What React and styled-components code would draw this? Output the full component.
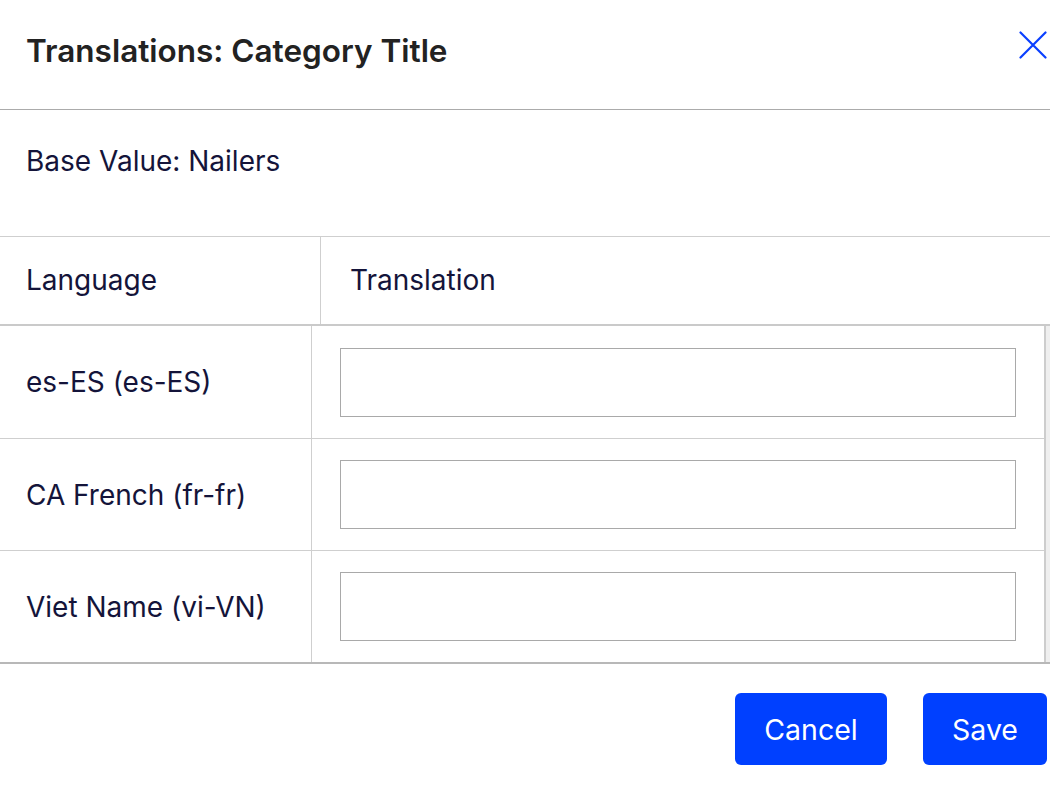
import React from 'react';
import styled, { createGlobalStyle } from 'styled-components';

const GlobalStyle = createGlobalStyle`
  html, body {
    margin: 0;
    padding: 0;
    background: #fff;
  }
  body {
    font-family: Inter, "Noto Sans", "Liberation Sans", sans-serif;
    color: #14143a;
  }
  * {
    box-sizing: border-box;
  }
`;

const Modal = styled.div`
  width: 1050px;
  height: 792px;
  background: #fff;
  display: flex;
  flex-direction: column;
`;

const Header = styled.header`
  height: 110px;
  display: flex;
  align-items: flex-start;
  justify-content: space-between;
  padding: 31px 3px 0 26px;
  border-bottom: 1px solid #ababab;
`;

const Title = styled.h1`
  margin: 0;
  font-size: 31.5px;
  font-weight: 600;
  line-height: 40px;
  color: #222;
`;

const CloseButton = styled.button`
  border: 0;
  background: none;
  padding: 0;
  width: 28px;
  height: 28px;
  cursor: pointer;
  color: #0a3fff;
  display: flex;
  align-items: center;
  justify-content: center;
`;

const BaseValue = styled.div`
  height: 126px;
  padding: 33px 26px 0;
  font-size: 28px;
  line-height: 36px;
`;

const Table = styled.div`
  display: flex;
  flex-direction: column;
  border-top: 1px solid #cfcfcf;
`;

const HeadRow = styled.div`
  display: flex;
  height: 89px;
  border-bottom: 2px solid #cacaca;
`;

const HeadCell = styled.div`
  display: flex;
  align-items: center;
  width: ${(p) => p.$width || 'auto'};
  flex: ${(p) => (p.$width ? 'none' : 1)};
  padding-left: ${(p) => p.$pad}px;
  font-size: 28px;
  border-right: ${(p) => (p.$divider ? '1px solid #cfcfcf' : '0')};
  padding-bottom: 2px;
`;

const BodyWrap = styled.div`
  display: flex;
  border-bottom: 2px solid #b8b8b8;
`;

const Rows = styled.div`
  flex: 1;
  border-right: 2px solid #cdcdcd;
`;

const ScrollTrack = styled.div`
  width: 4px;
  background: #efefef;
`;

const Row = styled.div`
  display: flex;
  height: 112px;
  border-top: ${(p) => (p.$first ? '0' : '1px solid #cfcfcf')};
`;

const LangCell = styled.div`
  width: 312px;
  display: flex;
  align-items: center;
  padding-left: 26px;
  font-size: 28px;
  border-right: 1px solid #cfcfcf;
`;

const InputCell = styled.div`
  flex: 1;
  display: flex;
  align-items: center;
  padding: 0 27px 0 28px;
`;

const TextInput = styled.input`
  width: 676px;
  height: 69px;
  border: 1px solid #a9a9a9;
  border-radius: 0;
  font-family: inherit;
  font-size: 24px;
  padding: 0 12px;
  outline: none;
  background: #fff;
`;

const Footer = styled.footer`
  display: flex;
  justify-content: flex-end;
  gap: 36px;
  padding: 29px 3px 0 0;
`;

const Button = styled.button`
  height: 72px;
  width: ${(p) => p.$width}px;
  border: 0;
  border-radius: 6px;
  background: #0040ff;
  color: #fff;
  font-family: inherit;
  font-size: 28.5px;
  cursor: pointer;
`;

const languages = ['es-ES (es-ES)', 'CA French (fr-fr)', 'Viet Name (vi-VN)'];

const CloseIcon = () => (
  <svg width="28" height="28" viewBox="0 0 28 28" fill="none">
    <path d="M1.5 1.5 L26.5 26.5 M26.5 1.5 L1.5 26.5" stroke="currentColor" strokeWidth="2.2" strokeLinecap="round" />
  </svg>
);

const App = () => {
  return (
    <>
      <GlobalStyle />
      <Modal>
        <Header>
          <Title>Translations: Category Title</Title>
          <CloseButton aria-label="Close">
            <CloseIcon />
          </CloseButton>
        </Header>
        <BaseValue>Base Value: Nailers</BaseValue>
        <Table>
          <HeadRow>
            <HeadCell $width="321px" $pad={26} $divider>Language</HeadCell>
            <HeadCell $pad={29}>Translation</HeadCell>
          </HeadRow>
          <BodyWrap>
            <Rows>
              {languages.map((lang, i) => (
                <Row key={lang} $first={i === 0}>
                  <LangCell>{lang}</LangCell>
                  <InputCell>
                    <TextInput type="text" />
                  </InputCell>
                </Row>
              ))}
            </Rows>
            <ScrollTrack />
          </BodyWrap>
        </Table>
        <Footer>
          <Button $width={152}>Cancel</Button>
          <Button $width={124}>Save</Button>
        </Footer>
      </Modal>
    </>
  );
};

export default App;
